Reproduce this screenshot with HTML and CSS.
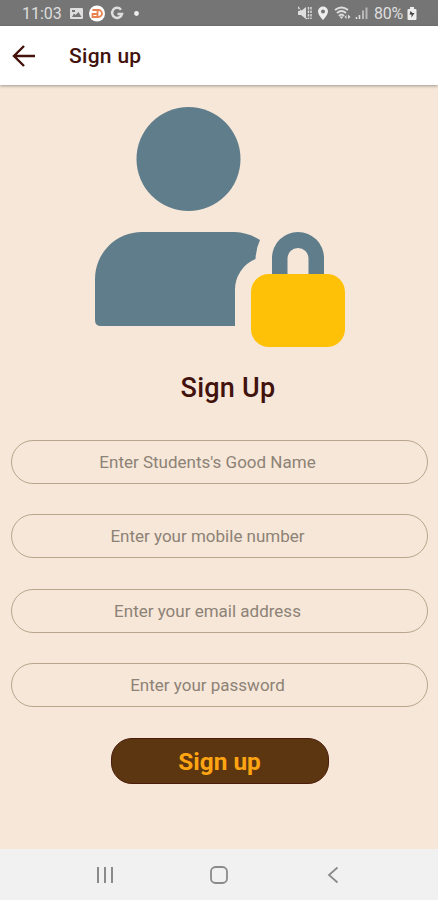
FILE: index.html
```html
<!DOCTYPE html>
<html lang="en">
<head>
    <meta charset="UTF-8">
    <meta name="viewport" content="width=device-width, initial-scale=1.0">
    <link rel="stylesheet" href="styles.css">
    <title>Sign up</title>
</head>

<body>
    <div class="statusbar">
        <span class="time">11:03</span>
        <svg class="status-left" width="74" height="18" viewBox="0 0 74 18">
            <path fill="#dedede" fill-rule="evenodd" d="M2 3h11q1 0 1 1v9q0 1-1 1H2q-1 0-1-1V4q0-1 1-1zM3 12h9.500l-3-5-3 3-1.500-1.500zM3 5v2h3V5z"/>
            <circle cx="28" cy="8.500" r="8" fill="#fff"/>
            <path d="M23.500 5h6a3.500 3.500 0 0 1 0 7h-6V9h5M28.500 5v7" fill="none" stroke="#ea8250" stroke-width="1.800"/>
            <path d="M52 4.700A5 5 0 1 0 53 9H48.500" fill="none" stroke="#dedede" stroke-width="2.500"/>
            <circle cx="67.500" cy="8.500" r="2.400" fill="#eee"/>
        </svg>
        <svg class="status-right" width="72" height="18" viewBox="0 0 72 18">
            <path d="M0 6h3l5-4v12l-5-4H0z" fill="#dedede"/>
            <path d="M0 2l9 12M10.500 2v12M13 2v12" fill="none" stroke="#dedede" stroke-width="1.400" stroke-dasharray="2.500 1"/>
            <path fill="#eee" fill-rule="evenodd" d="M25 1.500a5 5 0 0 1 5 5c0 3.500-5 8.500-5 8.500s-5-5-5-8.500a5 5 0 0 1 5-5zm0 3a2 2 0 1 0 0 4 2 2 0 0 0 0-4z"/>
            <path d="M37 5q6.500-5 13 0M39 8q4.500-4 9 0M41 11q2.500-3 5 0" fill="none" stroke="#dedede" stroke-width="1.900"/>
            <path d="M41.500 11.500h4l-2 2.500zM46.500 12l2-2v4zM50 9.500l2.500 2.500-2.500 2z" fill="#dedede"/>
            <path d="M58.500 14v-2M61.500 14v-4" stroke="#dedede" stroke-width="1.600"/>
            <path d="M65 14V5.500M68.500 14V2.500" stroke="#b8b8b8" stroke-width="2"/>
        </svg>
        <span class="percent">80%</span>
        <svg class="battery" width="10" height="14" viewBox="0 0 10 14">
            <path d="M3 0h4v2h1.500q1 0 1 1v9q0 1-1 1h-7q-1 0-1-1V3q0-1 1-1H3z" fill="#eee"/>
            <path d="M3.500 4L2.500 7.500h2v3l3-4.500h-2z" fill="#444"/>
        </svg>
    </div>

    <div class="navbar">
        <svg class="back" width="24" height="24" viewBox="0 0 24 24">
            <path d="M23 12H2M12 2L2 12l10 10" fill="none" stroke="#42120d" stroke-width="2.400"/>
        </svg>
        <span class="navbar-title">Sign up</span>
    </div>

    <div class="container">
        <!-- user with padlock -->
        <svg class="picture" width="250" height="240" viewBox="0 0 250 240">
            <g fill="#607d8b">
                <circle cx="93.500" cy="52" r="52"/>
                <path d="M47 125H140Q153 125.500 165 133Q161 141 160.500 152A33 33 0 0 0 140 182.500V219H6Q0 219 0 213V172A47 47 0 0 1 47 125z"/>
                <path d="M177 170V151a26 26 0 0 1 52 0v19h-15.500v-18.500a10.500 10.500 0 0 0-21 0V170z"/>
            </g>
            <rect x="156" y="167" width="94" height="73" rx="18" fill="#ffc107"/>
        </svg>

        <h1>Sign Up</h1>

        <form class="form">
            <input type="text" placeholder="Enter Students's Good Name">
            <input type="text" placeholder="Enter your mobile number">
            <input type="text" placeholder="Enter your email address">
            <input type="password" placeholder="Enter your password">
            <button type="button">Sign up</button>
        </form>
    </div>

    <div class="footer">
        <svg width="18" height="18" viewBox="0 0 18 18">
            <path d="M2 1v16M9 1v16M16 1v16" stroke="#8a8a8a" stroke-width="2"/>
        </svg>
        <svg width="18" height="18" viewBox="0 0 18 18">
            <rect x="1" y="1" width="16" height="16" rx="4.500" fill="none" stroke="#8a8a8a" stroke-width="1.800"/>
        </svg>
        <svg width="18" height="18" viewBox="0 0 18 18">
            <path d="M13.500 1.500L5 9l8.500 7.500" fill="none" stroke="#8a8a8a" stroke-width="1.800"/>
        </svg>
    </div>
</body>
</html>
```
FILE: styles.css
```css
* {
    box-sizing: border-box;
}
body {
    background-color: #f6e7d8;
    font-family: Roboto, sans-serif;
    display: flex;
    flex-direction: column;
    height: 100vh;
    margin: 0;
}
.statusbar {
    background-color: #757575;
    color: #dedede;
    display: flex;
    align-items: center;
    flex: none;
    height: 26px;
    padding: 1px 20px 0 22px;
    font-size: 16px;
}
.time {
    width: 40px;
}
.status-left {
    margin-left: 7px;
}
.status-right {
    margin-left: auto;
}
.percent {
    width: 30px;
    margin-left: 4px;
    letter-spacing: -0.3px;
}
.battery {
    margin-left: 3px;
    margin-right: 1px;
}
.navbar {
    background-color: #fff;
    color: #42120d;
    display: flex;
    align-items: center;
    flex: none;
    height: 59px;
    padding: 1px 12px 0;
    box-shadow: 0 1px 3px rgba(0, 0, 0, 0.35);
}
.navbar-title {
    margin-left: 33px;
    font-size: 21px;
    font-weight: 500;
    letter-spacing: 0.3px;
}
.container {
    flex: 1;
    display: flex;
    flex-direction: column;
    align-items: center;
    padding: 22px 10px 0 11px;
}
.picture {
    flex: none;
}
h1 {
    color: #42120d;
    font-size: 27px;
    font-weight: 500;
    line-height: 32px;
    letter-spacing: 0.25px;
    margin: 25px 0 36px;
    padding-left: 17px;
}
.form {
    width: 100%;
    display: flex;
    flex-direction: column;
    align-items: center;
    gap: 30.4px;
}
input {
    width: 100%;
    height: 44px;
    padding: 0 36px 0 12px;
    border: 1px solid #b9a58b;
    border-radius: 22px;
    background: none;
    font-family: inherit;
    font-size: 17px;
    text-align: center;
}
input::placeholder {
    color: #8d8276;
}
button {
    width: 218px;
    height: 46px;
    padding: 2px 0 0;
    border: 1px solid #4b1c0a;
    border-radius: 21px;
    background-color: #5c3610;
    color: #ffa412;
    font-family: inherit;
    font-size: 24.4px;
    font-weight: bold;
}
.footer {
    background-color: #f1f1f1;
    display: flex;
    justify-content: space-between;
    align-items: center;
    flex: none;
    height: 51px;
    padding: 0 96px;
}
```
